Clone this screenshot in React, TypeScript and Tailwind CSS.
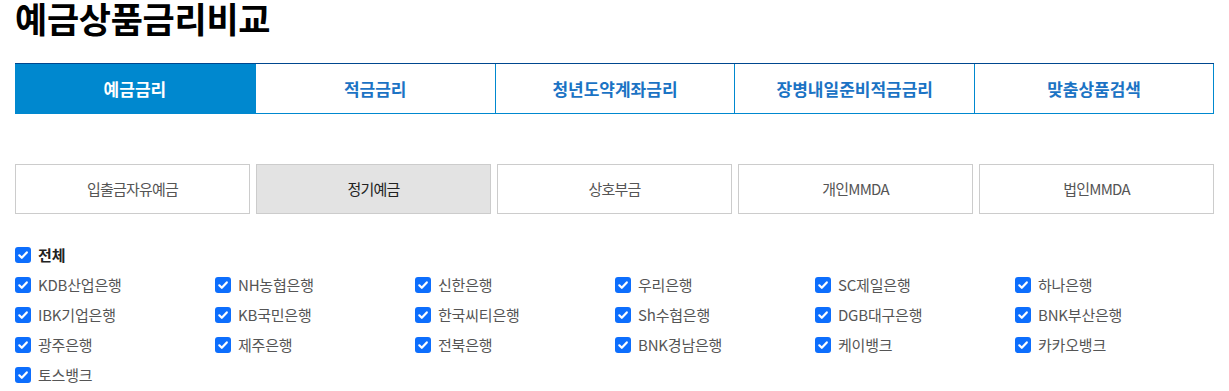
import React from "react";

const tabs = ["예금금리", "적금금리", "청년도약계좌금리", "장병내일준비적금금리", "맞춤상품검색"];
const subs = ["입출금자유예금", "정기예금", "상호부금", "개인MMDA", "법인MMDA"];
const banks = [
  "KDB산업은행", "NH농협은행", "신한은행", "우리은행", "SC제일은행", "하나은행",
  "IBK기업은행", "KB국민은행", "한국씨티은행", "Sh수협은행", "DGB대구은행", "BNK부산은행",
  "광주은행", "제주은행", "전북은행", "BNK경남은행", "케이뱅크", "카카오뱅크",
  "토스뱅크",
];

function Check() {
  return (
    <span className="w-[16px] h-[16px] rounded-[3px] bg-[#0d6efd] flex items-center justify-center shrink-0">
      <svg width="12" height="12" viewBox="0 0 12 12" fill="none">
        <path d="M2.3 6.3 L4.8 8.8 L9.8 3.4" stroke="white" strokeWidth="2.2" strokeLinecap="round" strokeLinejoin="round" />
      </svg>
    </span>
  );
}

export default function App() {
  return (
    <div className="bg-white w-[1229px] h-[391px] overflow-hidden px-[15px]" style={{ fontFamily: '"Noto Sans CJK KR", "Noto Sans", sans-serif' }}>
      <div className="h-[63px]">
        <h1 className="text-[35px] font-bold text-black leading-[36px] tracking-[-0.3px]">예금상품금리비교</h1>
      </div>
      <div className="w-[1199px] flex border-t border-[#00478f]">
        {tabs.map((t, i) => (
          <div
            key={t}
            className={
              i === 0
                ? "w-[240px] h-[50px] flex items-center justify-center bg-[#0088cf] text-white text-[17px] font-semibold border-b border-[#0088cf]"
                : "w-[240px] h-[50px] flex items-center justify-center bg-white text-[#1b73c4] text-[17px] font-semibold border-b border-[#0088cf] border-l border-l-[#0088cf]" + (i === 4 ? " border-r border-r-[#0088cf]" : "")
            }
          >
            {t}
          </div>
        ))}
      </div>
      <div className="mt-[50px] w-[1199px] flex gap-[6px]">
        {subs.map((s, i) => (
          <div
            key={s}
            className={
              i === 1
                ? "flex-1 h-[50px] flex items-center justify-center border border-[#cccccc] bg-[#e3e3e3] text-[#222] text-[15px] tracking-[-0.8px]"
                : "flex-1 h-[50px] flex items-center justify-center border border-[#cccccc] bg-white text-[#555] text-[15px] tracking-[-0.8px]"
            }
          >
            {s}
          </div>
        ))}
      </div>
      <div className="mt-[31px] flex items-center gap-[7px] h-[20px]">
        <Check />
        <span className="text-[15px] font-bold text-[#222]">전체</span>
      </div>
      <div className="mt-[10px] grid grid-cols-[200px_200px_200px_200px_200px_200px] gap-y-[10px]">
        {banks.map((b) => (
          <div key={b} className="flex items-center gap-[7px] h-[20px]">
            <Check />
            <span className="text-[15px] text-[#555] tracking-[-0.2px]">{b}</span>
          </div>
        ))}
      </div>
    </div>
  );
}
